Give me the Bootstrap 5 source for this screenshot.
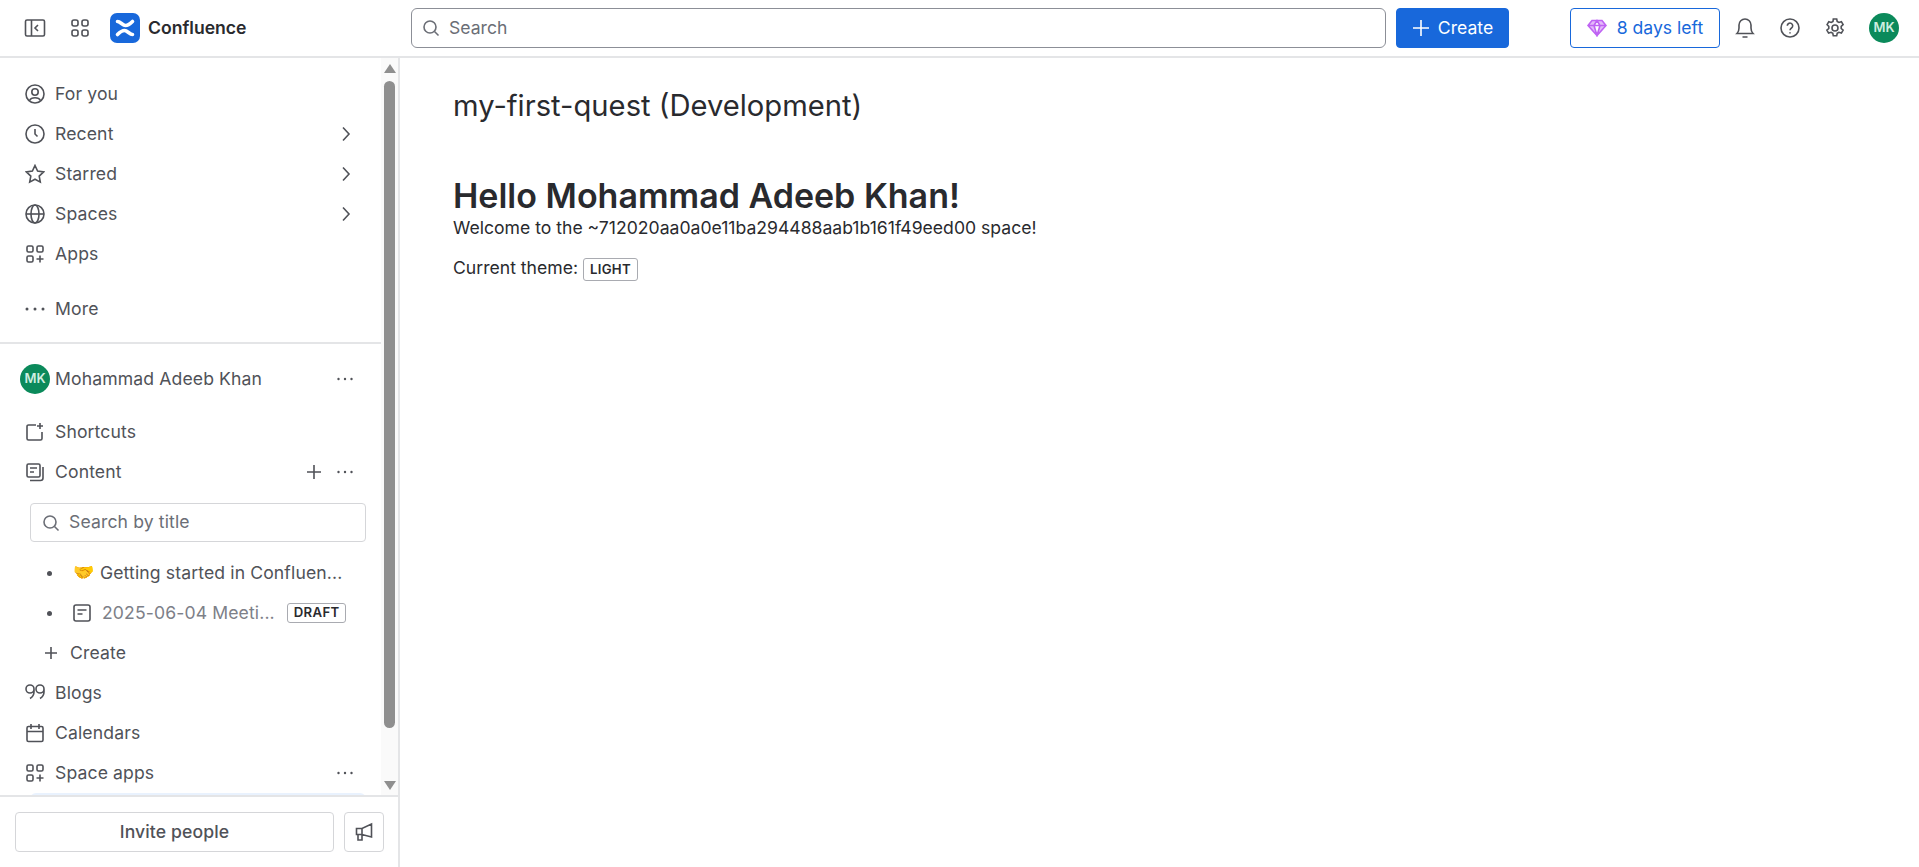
<!DOCTYPE html>
<html lang="en">
<head>
    <meta charset="UTF-8">
    <meta name="viewport" content="width=device-width, initial-scale=1.0">
    <title>my-first-quest (Development)</title>
    <link href="https://cdn.jsdelivr.net/npm/bootstrap@5.3.0/dist/css/bootstrap.min.css" rel="stylesheet">
    <style>
        html, body { height: 100%; overflow: hidden; }
        body { font-family: Inter, "Noto Sans", sans-serif; color: #292a2e; background: #fff; font-size: 17.6px; }
        svg { display: block; flex: none; fill: none; stroke: currentColor; stroke-width: 1.6; }
        .top-bar { height: 58px; border-bottom: 2px solid #e4e5e7; padding: 0 21px 0 24px; }
        .top-left { width: 387px; color: #505258; }
        .brand-mark { width: 30px; height: 30px; background: #1868db; border-radius: 7px; margin-left: 20px; }
        .brand-mark svg { stroke: #fff; stroke-width: 3.6; stroke-linecap: round; }
        .brand-name { font-size: 17.6px; font-weight: 600; color: #292a2e; margin-left: 8px; }
        .top-search { width: 975px; height: 40px; border: 1px solid #8c8f97; border-radius: 6px; padding: 0 10px; color: #6b6e76; gap: 9px; }
        .top-create { width: 113px; height: 40px; margin-left: 10px; background: #1868db; border-color: #1868db; border-radius: 4px; font-size: 17.6px; padding: 0; gap: 8px; }
        .trial-btn { width: 150px; height: 40px; margin-left: 61px; border: 1px solid #1868db; border-radius: 4px; color: #1868db; background: #fff; font-size: 17.6px; padding: 0; gap: 10px; }
        .top-actions { gap: 23px; margin-left: 14px; }
        .top-icon { width: 22px; color: #505258; }
        .top-icon svg { margin: 0 auto; }
        .green-avatar { width: 30px; height: 30px; border-radius: 50%; background: #0b8a5b; color: #cfeee0; font-size: 13px; font-weight: 600; letter-spacing: 0; }
        .page-body { height: 809px; }
        .side-panel { width: 400px; border-right: 2px solid #e4e5e7; }
        .side-scroll { height: 737px; overflow: hidden; }
        .side-items { width: 381px; color: #505258; overflow: hidden; letter-spacing: .12px; }
        .side-row { height: 40px; padding: 0 25px; }
        .side-row .row-label { margin-left: 10px; }
        .row-end { margin-left: auto; color: #505258; }
        .dots-end { margin-right: 3px; }
        .scroll-track { width: 17px; background: #fafafa; }
        .scroll-up, .scroll-down { width: 0; height: 0; border-left: 6px solid transparent; border-right: 6px solid transparent; }
        .scroll-up { border-bottom: 9px solid #8f8f8f; margin-top: 6px; }
        .scroll-down { border-top: 9px solid #8f8f8f; margin-top: 53px; }
        .scroll-thumb { width: 11px; height: 647px; background: #8f8f8f; border-radius: 6px; margin-top: 8px; }
        .side-rule { border-top: 2px solid #e4e5e7; }
        .title-search { height: 39px; margin: 11px 15px 0 30px; border: 1px solid #d5d6d9; border-radius: 4px; padding: 0 11px; color: #6b6e76; gap: 9px; }
        .tree-dot { width: 5px; height: 5px; background: #505258; border-radius: 50%; margin-left: 22px; margin-right: 21px; flex: none; }
        .tree-emoji { font-size: 17px; width: 27px; flex: none; }
        .tree-muted { color: #7d8088; }
        .status-tag { border: 1px solid #a9abb1; border-radius: 3px; font-size: 13.2px; font-weight: 600; line-height: 1; color: #292a2e; padding: 2px 6px 3px; background: #fff; letter-spacing: .3px; }
        .active-strip { height: 6px; margin: 0 15px 0 30px; background: #e9f2fe; border-radius: 6px 6px 0 0; }
        .side-foot { height: 71px; border-top: 2px solid #e4e5e7; padding: 15px 13px 0 15px; }
        .invite-btn { width: 319px; height: 40px; border: 1px solid #d5d6d9; border-radius: 4px; color: #505258; font-size: 17.6px; font-weight: 500; padding: 0; background: #fff; letter-spacing: .12px; }
        .announce-btn { width: 40px; height: 40px; margin-left: 10px; border: 1px solid #d5d6d9; border-radius: 4px; color: #505258; padding: 0; background: #fff; }
        .main-pane { padding: 29px 0 0 53px; }
        .page-title { font-size: 29.2px; font-weight: 400; line-height: 38px; margin: 0 0 49px; color: #292a2e; }
        .hello-head { font-size: 34px; font-weight: 600; line-height: 43px; margin: 0 0 -1px; color: #292a2e; }
        .page-text { line-height: 24px; margin: 0 0 16px; }
    </style>
</head>
<body>
    <header class="top-bar d-flex align-items-center">
        <div class="top-left d-flex align-items-center flex-shrink-0">
            <svg width="22" height="20" viewBox="0 0 22 20"><rect x="1.5" y="2" width="19" height="16" rx="1.5"/><path d="M7.5 2v16M14 7l-3 3 3 3"/></svg>
            <svg class="ms-4" width="20" height="20" viewBox="0 0 20 20"><rect x="2" y="2" width="6" height="6" rx="2"/><rect x="12" y="2" width="6" height="6" rx="2"/><rect x="2" y="12" width="6" height="6" rx="2"/><rect x="12" y="12" width="6" height="6" rx="2"/></svg>
            <div class="brand-mark d-flex align-items-center justify-content-center">
                <svg width="30" height="30" viewBox="0 0 30 30"><path d="M7.500 8.500C10.500 8.500 12.500 12.500 15.500 12.500 18 12.500 20.500 10.500 22.500 8.500"/><path d="M22.500 21.500C19.500 21.500 17.500 17.500 14.500 17.500 12 17.500 9.500 19.500 7.500 21.500"/></svg>
            </div>
            <span class="brand-name">Confluence</span>
        </div>
        <div class="top-search d-flex align-items-center flex-shrink-0">
            <svg width="18" height="18" viewBox="0 0 18 18"><circle cx="8" cy="8" r="6"/><path d="M12.500 12.500 16.500 16.500"/></svg>
            <span>Search</span>
        </div>
        <button class="btn btn-primary top-create d-flex align-items-center justify-content-center flex-shrink-0" type="button">
            <svg width="18" height="18" viewBox="0 0 18 18"><path d="M9 1v16M1 9h16"/></svg>Create
        </button>
        <button class="btn trial-btn d-flex align-items-center justify-content-center flex-shrink-0" type="button">
            <svg width="20" height="18" viewBox="0 0 20 18" style="color:#bf63f3"><path d="M5 1.500h10l4 5-9 10-9-10zM1 6.500h18M7 6.500l3 10 3-10-3-5-3 5" fill="#e3b8fa"/></svg>8 days left
        </button>
        <div class="top-actions d-flex align-items-center flex-shrink-0">
            <div class="top-icon"><svg width="20" height="22" viewBox="0 0 20 22"><path d="M2 16.500c1.500-1.500 2-3 2-5.500V8a6 6 0 0 1 12 0v3c0 2.500.5 4 2 5.500zM7.500 20h5"/></svg></div>
            <div class="top-icon"><svg width="20" height="20" viewBox="0 0 20 20"><circle cx="10" cy="10" r="9"/><path d="M7.300 7.800a2.700 2.700 0 1 1 4.200 2.200c-1 .7-1.500 1.100-1.500 2.300M10 14.200v1.300"/></svg></div>
            <div class="top-icon"><svg width="20" height="20" viewBox="0 0 20 20"><circle cx="10" cy="10" r="3"/><path d="M8.300 1h3.400l.5 2.500 1.700 1 2.500-.8 1.700 3-1.900 1.700v2l1.900 1.700-1.700 3-2.500-.8-1.700 1-.5 2.500H8.300l-.5-2.500-1.700-1-2.500.8-1.700-3 1.900-1.700v-2L2.100 6.700l1.700-3 2.500.8 1.700-1z"/></svg></div>
            <div class="green-avatar d-flex align-items-center justify-content-center">MK</div>
        </div>
    </header>

    <div class="page-body d-flex">
        <aside class="side-panel d-flex flex-column flex-shrink-0">
            <div class="side-scroll d-flex">
                <nav class="side-items">
                    <div style="height:16px"></div>
                    <div class="side-row d-flex align-items-center">
                        <svg width="20" height="20" viewBox="0 0 20 20"><circle cx="10" cy="10" r="9"/><circle cx="10" cy="8" r="3.200"/><path d="M4.500 16.500c1-2 3-2.800 5.500-2.800s4.500.8 5.500 2.800"/></svg>
                        <span class="row-label">For you</span>
                    </div>
                    <div class="side-row d-flex align-items-center">
                        <svg width="20" height="20" viewBox="0 0 20 20"><circle cx="10" cy="10" r="9"/><path d="M10 5v5l2.500 2.500"/></svg>
                        <span class="row-label">Recent</span>
                        <svg class="row-end" width="20" height="20" viewBox="0 0 20 20"><path d="M7 3.500l6 6.500-6 6.500"/></svg>
                    </div>
                    <div class="side-row d-flex align-items-center">
                        <svg width="20" height="20" viewBox="0 0 20 20"><path d="M10 1.500l2.600 5.600 6 .8-4.400 4.200 1.100 6L10 15.200l-5.300 2.900 1.100-6L1.400 7.900l6-.8z"/></svg>
                        <span class="row-label">Starred</span>
                        <svg class="row-end" width="20" height="20" viewBox="0 0 20 20"><path d="M7 3.500l6 6.500-6 6.500"/></svg>
                    </div>
                    <div class="side-row d-flex align-items-center">
                        <svg width="20" height="20" viewBox="0 0 20 20"><circle cx="10" cy="10" r="9"/><ellipse cx="10" cy="10" rx="4" ry="9"/><path d="M1 10h18"/></svg>
                        <span class="row-label">Spaces</span>
                        <svg class="row-end" width="20" height="20" viewBox="0 0 20 20"><path d="M7 3.500l6 6.500-6 6.500"/></svg>
                    </div>
                    <div class="side-row d-flex align-items-center">
                        <svg width="20" height="20" viewBox="0 0 20 20"><rect x="2" y="2" width="6" height="6" rx="1.500"/><rect x="12" y="2" width="6" height="6" rx="1.500"/><rect x="2" y="12" width="6" height="6" rx="1.500"/><path d="M15 11.500v7M11.500 15h7"/></svg>
                        <span class="row-label">Apps</span>
                    </div>
                    <div class="side-row d-flex align-items-center" style="margin-top:15px">
                        <svg width="20" height="20" viewBox="0 0 20 20"><circle cx="2" cy="10" r="1.500" fill="currentColor" stroke="none"/><circle cx="10" cy="10" r="1.500" fill="currentColor" stroke="none"/><circle cx="18" cy="10" r="1.500" fill="currentColor" stroke="none"/></svg>
                        <span class="row-label">More</span>
                    </div>
                    <div class="side-rule" style="margin-top:13px"></div>
                    <div class="side-row d-flex align-items-center" style="height:30px;margin-top:20px;padding-left:20px">
                        <div class="green-avatar d-flex align-items-center justify-content-center flex-shrink-0">MK</div>
                        <span class="text-nowrap" style="margin-left:5px">Mohammad Adeeb Khan</span>
                        <svg class="row-end dots-end" width="16" height="16" viewBox="0 0 16 16"><circle cx="1.500" cy="8" r="1.200" fill="currentColor" stroke="none"/><circle cx="8" cy="8" r="1.200" fill="currentColor" stroke="none"/><circle cx="14.500" cy="8" r="1.200" fill="currentColor" stroke="none"/></svg>
                    </div>
                    <div class="side-row d-flex align-items-center" style="margin-top:18px">
                        <svg width="20" height="20" viewBox="0 0 20 20"><path d="M11 3H3.500A1.500 1.500 0 0 0 2 4.500v12A1.500 1.500 0 0 0 3.500 18h12a1.500 1.500 0 0 0 1.500-1.500V10M15 1v6M12 4h6"/></svg>
                        <span class="row-label">Shortcuts</span>
                    </div>
                    <div class="side-row d-flex align-items-center">
                        <svg width="20" height="20" viewBox="0 0 20 20"><rect x="2" y="2" width="13" height="13" rx="1.500"/><path d="M5 6h7M5 10h4M18 5v11a2.500 2.500 0 0 1-2.500 2.500H5"/></svg>
                        <span class="row-label">Content</span>
                        <svg class="row-end" width="16" height="16" viewBox="0 0 16 16" style="margin-right:15px"><path d="M8 1v14M1 8h14"/></svg>
                        <svg class="dots-end" width="16" height="16" viewBox="0 0 16 16"><circle cx="1.500" cy="8" r="1.200" fill="currentColor" stroke="none"/><circle cx="8" cy="8" r="1.200" fill="currentColor" stroke="none"/><circle cx="14.500" cy="8" r="1.200" fill="currentColor" stroke="none"/></svg>
                    </div>
                    <div class="title-search d-flex align-items-center">
                        <svg width="18" height="18" viewBox="0 0 18 18"><circle cx="8" cy="8" r="6"/><path d="M12.500 12.500 16.500 16.500"/></svg>
                        <span>Search by title</span>
                    </div>
                    <div class="side-row d-flex align-items-center" style="margin-top:11px;padding-right:10px">
                        <span class="tree-dot"></span>
                        <span class="tree-emoji">🤝</span>
                        <span class="text-nowrap">Getting started in Confluen...</span>
                    </div>
                    <div class="side-row d-flex align-items-center" style="padding-right:10px">
                        <span class="tree-dot"></span>
                        <svg width="18" height="18" viewBox="0 0 18 18"><rect x="1" y="1" width="16" height="16" rx="2"/><path d="M4.500 6h9M4.500 10h5"/></svg>
                        <span class="tree-muted text-nowrap" style="margin-left:11px">2025-06-04 Meeti...</span>
                        <span class="status-tag" style="margin-left:12px">DRAFT</span>
                    </div>
                    <div class="side-row d-flex align-items-center" style="padding-left:43px">
                        <svg width="16" height="16" viewBox="0 0 16 16"><path d="M8 2v12M2 8h12"/></svg>
                        <span style="margin-left:11px">Create</span>
                    </div>
                    <div class="side-row d-flex align-items-center">
                        <svg width="20" height="20" viewBox="0 0 20 20"><path d="M9 6a4 4 0 1 1-8 0 4 4 0 0 1 8 0zm0 0v3c0 3-1.500 5-4 6.500M19 6a4 4 0 1 1-8 0 4 4 0 0 1 8 0zm0 0v3c0 3-1.500 5-4 6.500"/></svg>
                        <span class="row-label">Blogs</span>
                    </div>
                    <div class="side-row d-flex align-items-center">
                        <svg width="20" height="20" viewBox="0 0 20 20"><rect x="2" y="3.500" width="16" height="15" rx="1.500"/><path d="M2 8.500h16M6 1v5M14 1v5"/></svg>
                        <span class="row-label">Calendars</span>
                    </div>
                    <div class="side-row d-flex align-items-center">
                        <svg width="20" height="20" viewBox="0 0 20 20"><rect x="2" y="2" width="6" height="6" rx="1.500"/><rect x="12" y="2" width="6" height="6" rx="1.500"/><rect x="2" y="12" width="6" height="6" rx="1.500"/><path d="M15 11.500v7M11.500 15h7"/></svg>
                        <span class="row-label">Space apps</span>
                        <svg class="row-end dots-end" width="16" height="16" viewBox="0 0 16 16"><circle cx="1.500" cy="8" r="1.200" fill="currentColor" stroke="none"/><circle cx="8" cy="8" r="1.200" fill="currentColor" stroke="none"/><circle cx="14.500" cy="8" r="1.200" fill="currentColor" stroke="none"/></svg>
                    </div>
                    <div class="active-strip"></div>
                </nav>
                <div class="scroll-track d-flex flex-column align-items-center">
                    <div class="scroll-up"></div>
                    <div class="scroll-thumb"></div>
                    <div class="scroll-down"></div>
                </div>
            </div>
            <div class="side-foot d-flex">
                <button class="btn invite-btn" type="button">Invite people</button>
                <button class="btn announce-btn d-flex align-items-center justify-content-center" type="button">
                    <svg width="20" height="20" viewBox="0 0 20 20"><path d="M17.500 2v13L8 12.500H2.500V6.500H8zM8 6.500v6M4 12.500V18h4v-5.500"/></svg>
                </button>
            </div>
        </aside>
        <main class="main-pane flex-grow-1">
            <h1 class="page-title">my-first-quest (Development)</h1>
            <h2 class="hello-head">Hello Mohammad Adeeb Khan!</h2>
            <p class="page-text">Welcome to the ~712020aa0a0e11ba294488aab1b161f49eed00 space!</p>
            <p class="page-text">Current theme: <span class="status-tag">LIGHT</span></p>
        </main>
    </div>
</body>
</html>
